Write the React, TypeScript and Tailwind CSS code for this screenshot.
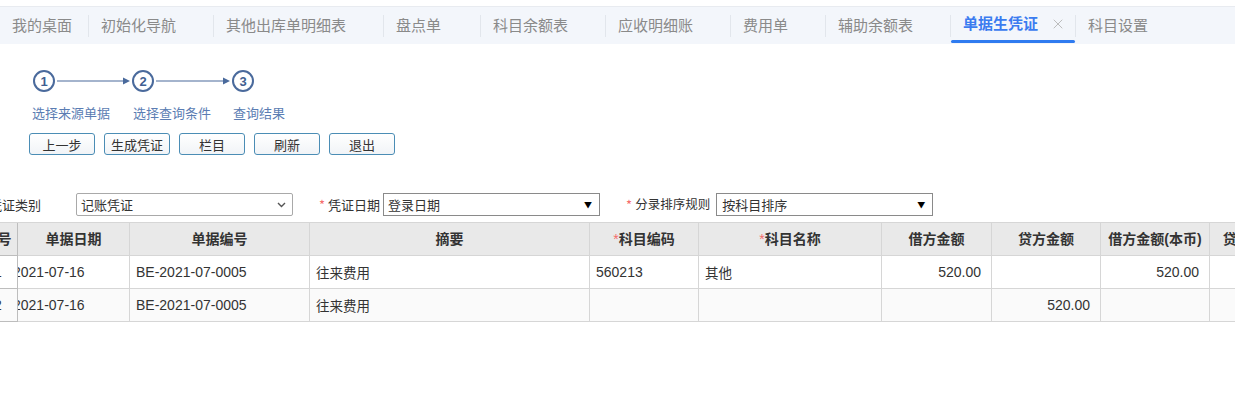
import { X } from "lucide-react";

const tabs = [
  { name: "我的桌面", w: "w-[88px]" },
  { name: "初始化导航", w: "w-[124px]" },
  { name: "其他出库单明细表", w: "w-[169px]" },
  { name: "盘点单", w: "w-[96px]" },
  { name: "科目余额表", w: "w-[124px]" },
  { name: "应收明细账", w: "w-[124px]" },
  { name: "费用单", w: "w-[94px]" },
  { name: "辅助余额表", w: "w-[124px]" },
];

const buttons = ["上一步", "生成凭证", "栏目", "刷新", "退出"];

const cols = [
  { title: "序号", req: false },
  { title: "单据日期", req: false },
  { title: "单据编号", req: false },
  { title: "摘要", req: false },
  { title: "科目编码", req: true },
  { title: "科目名称", req: true },
  { title: "借方金额", req: false },
  { title: "贷方金额", req: false },
  { title: "借方金额(本币)", req: false },
  { title: "贷方金额(本币)", req: false },
];

const rows = [
  { no: "1", date: "2021-07-16", code: "BE-2021-07-0005", memo: "往来费用", acct: "560213", acctName: "其他", debit: "520.00", credit: "", debitL: "520.00", bg: "bg-white" },
  { no: "2", date: "2021-07-16", code: "BE-2021-07-0005", memo: "往来费用", acct: "", acctName: "", debit: "", credit: "520.00", debitL: "", bg: "bg-[#fafafa]" },
];

function Steps() {
  return (
    <svg width="240" height="26" viewBox="0 0 240 26" className="block">
      <g stroke="#4a6a9c" fill="none" strokeWidth="2">
        <circle cx="14" cy="13" r="10" />
        <circle cx="113" cy="13" r="10" />
        <circle cx="213" cy="13" r="10" />
        <line x1="27" y1="13" x2="94" y2="13" strokeWidth="1.2" />
        <line x1="126" y1="13" x2="194" y2="13" strokeWidth="1.2" />
      </g>
      <polygon points="93,9.5 100,13 93,16.5" fill="#4a6a9c" />
      <polygon points="193,9.5 200,13 193,16.5" fill="#4a6a9c" />
      <g fill="#3f5f92" fontSize="13" fontWeight="700" fontFamily="Liberation Sans, sans-serif" textAnchor="middle">
        <text x="14" y="17.5">1</text>
        <text x="113" y="17.5">2</text>
        <text x="213" y="17.5">3</text>
      </g>
    </svg>
  );
}

function Caret() {
  return <span className="text-[8px] leading-none text-black">▼</span>;
}

export default function App() {
  return (
    <div className="w-[1235px] h-[412px] bg-white overflow-hidden font-['Liberation_Sans','Noto_Sans_CJK_SC',sans-serif] text-[#333]">
      {/* tab bar */}
      <div className="pt-[6px]">
        <div className="h-[38px] bg-[#f3f6fb] border-t border-[#e8ebf0] flex items-stretch">
          {tabs.map((t) => (
            <div key={t.name} className="flex items-stretch">
              <div className={`${t.w} pl-[12px] flex items-center text-[15px] text-[#8a8a8a] font-['Noto_Sans_CJK_SC',sans-serif]`}>{t.name}</div>
              <div className="w-px h-[22px] self-center bg-[#e2e6ec]" />
            </div>
          ))}
          <div className="w-[124px] pl-[12px] flex flex-col">
            <div className="flex-1 flex items-center">
              <span className="text-[15px] font-bold text-[#3b7cf0] font-['Noto_Sans_CJK_SC',sans-serif]">单据生凭证</span>
              <X size={16} strokeWidth={1.4} className="ml-[12px] text-[#b8b8b8]" />
            </div>
            <div className="-ml-[12px] h-[3px] mb-[1px] rounded-full bg-[#2f7bf0]" />
          </div>
          <div className="w-px h-[22px] self-center bg-[#e2e6ec]" />
          <div className="pl-[12px] flex items-center text-[15px] text-[#8a8a8a] font-['Noto_Sans_CJK_SC',sans-serif]">科目设置</div>
        </div>
      </div>

      {/* steps */}
      <div className="mt-[24px] ml-[30px]">
        <Steps />
      </div>
      <div className="mt-[10px] ml-[32px] flex text-[13px] text-[#5b7db3] font-['Noto_Sans_CJK_SC',sans-serif] leading-[18px]">
        <span className="w-[101px]">选择来源单据</span>
        <span className="w-[100px]">选择查询条件</span>
        <span>查询结果</span>
      </div>

      {/* buttons */}
      <div className="mt-[11px] ml-[29px] flex gap-[9px]">
        {buttons.map((b) => (
          <button key={b} className="w-[66px] h-[22px] border border-[#4b8db5] rounded-[3px] bg-gradient-to-b from-white to-[#f1f4f7] text-[13px] leading-none text-[#333] font-['Noto_Sans_CJK_SC',sans-serif]">
            {b}
          </button>
        ))}
      </div>

      {/* filter row */}
      <div className="mt-[38px] h-[23px] flex items-center text-[13px] font-['Noto_Sans_CJK_SC',sans-serif]">
        <span className="-ml-[11px] w-[87px]">凭证类别</span>
        <div className="w-[217px] h-[23px] border border-[#a9a9a9] rounded-[2px] flex items-center justify-between pl-[4px] pr-[6px]">
          <span>记账凭证</span>
          <svg width="9" height="6" viewBox="0 0 9 6"><path d="M1 1l3.5 3.5L8 1" stroke="#555" strokeWidth="1.4" fill="none" /></svg>
        </div>
        <span className="ml-[26px] text-[#f56c6c]">*</span>
        <span className="ml-[3px] w-[55px]">凭证日期</span>
        <div className="w-[217px] h-[23px] border border-[#8a8a8a] flex items-center justify-between pl-[4px] pr-[7px]">
          <span>登录日期</span>
          <Caret />
        </div>
        <span className="ml-[26px] text-[#f56c6c]">*</span>
        <span className="ml-[3px] w-[81px] text-[12.5px]">分录排序规则</span>
        <div className="w-[217px] h-[23px] border border-[#8a8a8a] flex items-center justify-between pl-[5px] pr-[7px]">
          <span>按科目排序</span>
          <Caret />
        </div>
      </div>

      {/* table */}
      <div className="mt-[6px] w-[1235px] overflow-hidden">
        <div className="w-[1330px] grid grid-cols-[18px_112px_180px_280px_109px_183px_110px_109px_109px_120px] border-t border-[#d6d6d6] text-[14px]">
          {cols.map((c, i) => (
            <div key={c.title} className={`h-[33px] bg-[#e9e9e9] border-b border-r ${i === 0 ? "border-[#bdbdbd]" : "border-[#d6d6d6]"} font-bold flex items-center justify-center overflow-hidden whitespace-nowrap`}>
              {i === 0 ? (
                <div className="w-[40px] shrink-0 -ml-[22px] text-center">{c.title}</div>
              ) : (
                <span>
                  {c.req && <span className="text-[#f56c6c] font-normal">*</span>}
                  {c.title}
                </span>
              )}
            </div>
          ))}
          {rows.map((r) => (
            <div key={r.no} className="contents">
              <div className={`${r.bg} h-[33px] border-b border-r border-[#bdbdbd] flex items-center overflow-hidden`}>
                <div className="w-[40px] shrink-0 -ml-[22px] text-center">{r.no}</div>
              </div>
              <div className={`${r.bg} h-[33px] border-b border-r border-[#d6d6d6] flex items-center overflow-hidden`}>
                <span className="-ml-[5px]">{r.date}</span>
              </div>
              <div className={`${r.bg} h-[33px] border-b border-r border-[#d6d6d6] flex items-center pl-[6px]`}>{r.code}</div>
              <div className={`${r.bg} h-[33px] border-b border-r border-[#d6d6d6] flex items-center pl-[6px] font-['Noto_Sans_CJK_SC',sans-serif] text-[13.5px]`}>{r.memo}</div>
              <div className={`${r.bg} h-[33px] border-b border-r border-[#d6d6d6] flex items-center pl-[6px]`}>{r.acct}</div>
              <div className={`${r.bg} h-[33px] border-b border-r border-[#d6d6d6] flex items-center pl-[6px] font-['Noto_Sans_CJK_SC',sans-serif] text-[13.5px]`}>{r.acctName}</div>
              <div className={`${r.bg} h-[33px] border-b border-r border-[#d6d6d6] flex items-center justify-end pr-[10px]`}>{r.debit}</div>
              <div className={`${r.bg} h-[33px] border-b border-r border-[#d6d6d6] flex items-center justify-end pr-[10px]`}>{r.credit}</div>
              <div className={`${r.bg} h-[33px] border-b border-r border-[#d6d6d6] flex items-center justify-end pr-[10px]`}>{r.debitL}</div>
              <div className={`${r.bg} h-[33px] border-b border-r border-[#d6d6d6]`} />
            </div>
          ))}
        </div>
      </div>
    </div>
  );
}
